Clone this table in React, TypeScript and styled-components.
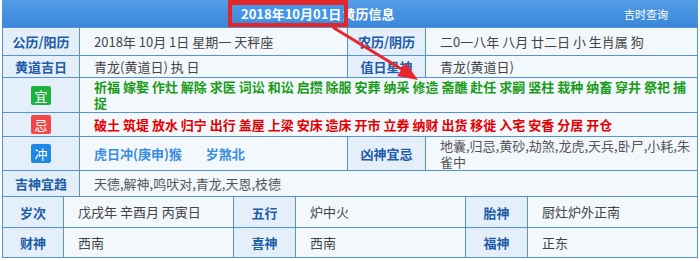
import React from 'react';
import styled, { createGlobalStyle } from 'styled-components';

const BORDER = '#5592da';

const GlobalStyle = createGlobalStyle`
  body {
    margin: 0;
    background: #ffffff;
    font-family: "Noto Sans CJK SC", "Noto Sans", sans-serif;
  }
`;

const TOP_COLS = '76px 267px 77px 1fr';
const WIDE_COLS = '76px 1fr';
const BOTTOM_COLS = '60px 169px 61px 169px 61px 1fr';

const App: React.FC = () => {
    return <Page>
        <GlobalStyle />
        <Panel>
            <Header>
                <Title><DateMark>2018年10月01日</DateMark>黄历信息</Title>
                <HeaderLink>吉时查询</HeaderLink>
            </Header>

            <Row $cols={TOP_COLS} $h={27}>
                <Label>公历/阳历</Label>
                <Value>2018年 10月 1日 星期一 天秤座</Value>
                <Label>农历/阴历</Label>
                <Value>二0一八年 八月 廿二日 小 生肖属 狗</Value>
            </Row>
            <Row $cols={TOP_COLS} $h={21}>
                <Label>黄道吉日</Label>
                <Value>青龙(黄道日) 执 日</Value>
                <Label>值日星神</Label>
                <Value>青龙(黄道日)</Value>
            </Row>
            <Row $cols={WIDE_COLS} $h={34}>
                <Label><Badge $bg="#1db23f">宜</Badge></Label>
                <Value $tone="good">祈福 嫁娶 作灶 解除 求医 词讼 和讼 启攒 除服 安葬 纳采 修造 斋醮 赴任 求嗣 竖柱 栽种 纳畜 穿井 祭祀 捕捉</Value>
            </Row>
            <Row $cols={WIDE_COLS} $h={23}>
                <Label><Badge $bg="#f04747">忌</Badge></Label>
                <Value $tone="bad">破土 筑堤 放水 归宁 出行 盖屋 上梁 安床 造床 开市 立券 纳财 出货 移徙 入宅 安香 分居 开仓</Value>
            </Row>
            <Row $cols={TOP_COLS} $h={33}>
                <Label><Badge $bg="#1e88e5">冲</Badge></Label>
                <Value $tone="clash">
                    <ClashItem>虎日冲(庚申)猴</ClashItem>
                    <ClashItem>岁煞北</ClashItem>
                </Value>
                <Label>凶神宜忌</Label>
                <Value $tone="muted">地囊,归忌,黄砂,劫煞,龙虎,天兵,卧尸,小耗,朱雀中</Value>
            </Row>
            <Row $cols={WIDE_COLS} $h={25}>
                <Label>吉神宜趋</Label>
                <Value $tone="muted">天德,解神,鸣吠对,青龙,天恩,枝德</Value>
            </Row>

            <Row $cols={BOTTOM_COLS} $h={30}>
                <Label>岁次</Label>
                <Value>戊戌年 辛酉月 丙寅日</Value>
                <Label>五行</Label>
                <Value>炉中火</Value>
                <Label>胎神</Label>
                <Value>厨灶炉外正南</Value>
            </Row>
            <Row $cols={BOTTOM_COLS} $h={29}>
                <Label>财神</Label>
                <Value>西南</Value>
                <Label>喜神</Label>
                <Value>西南</Value>
                <Label>福神</Label>
                <Value>正东</Value>
            </Row>

            {/* red pointer drawn over the table, from the date box down to 修造 */}
            <Pointer width="92" height="60" viewBox="0 0 92 60">
                <line x1="3" y1="4" x2="72" y2="46" stroke="#e8262b" strokeWidth="3" strokeLinecap="round" />
                <polygon points="87,56 66,52 75,39" fill="#e8262b" />
            </Pointer>
        </Panel>
    </Page>
};

const Page = styled.div`
    width: 700px;
    height: 261px;
    overflow: hidden;
`

const Panel = styled.div`
    position: relative;
    width: 694px;
    margin-left: 2px;
    border: 1px solid ${BORDER};
    border-top: none;
`

const Header = styled.div`
    height: 27px;
    margin: 0 -1px;
    padding: 0 30px 0 238px;
    display: flex;
    align-items: center;
    color: #ffffff;
    background: linear-gradient(to bottom, #539de5, #3b87da);
`

const Title = styled.h1`
    flex: 1;
    margin: 0;
    font-size: 13px;
    font-weight: bold;
    line-height: 15px;
    white-space: nowrap;
`

const DateMark = styled.span`
    position: relative;
    display: inline-block;
    padding: 0 1px;
    background: #4395ea;
    &::after {
        content: "";
        position: absolute;
        left: -12px;
        right: -6px;
        top: -6px;
        bottom: -6px;
        border: 4px solid #e3262a;
        border-top-width: 5px;
    }
`

const HeaderLink = styled.a`
    font-size: 11px;
    color: #ffffff;
    cursor: pointer;
`

const Row = styled.div<{ $cols: string; $h: number }>`
    display: grid;
    grid-template-columns: ${p => p.$cols};
    column-gap: 1px;
    height: ${p => p.$h}px;
    background: ${BORDER};
    border-top: 1px solid ${BORDER};
`

const Label = styled.div`
    display: flex;
    align-items: center;
    justify-content: center;
    background: #e5effa;
    color: #1d5ca6;
    font-size: 13px;
    font-weight: bold;
    white-space: nowrap;
`

const toneColor = {
    plain: '#444444',
    good: '#1a9b1a',
    bad: '#e40000',
    clash: '#3a8ce0',
    muted: '#555555',
};

const Value = styled.div<{ $tone?: keyof typeof toneColor }>`
    display: flex;
    align-items: center;
    padding: 0 3px 0 14px;
    background: #f3f8fd;
    color: ${p => toneColor[p.$tone || 'plain']};
    font-size: 13px;
    line-height: 16px;
    font-weight: ${p => (p.$tone === 'good' || p.$tone === 'bad' || p.$tone === 'clash') ? 'bold' : 'normal'};
`

const ClashItem = styled.span`
    margin-right: 24px;
`

const Badge = styled.span<{ $bg: string }>`
    display: inline-flex;
    align-items: center;
    justify-content: center;
    width: 20px;
    height: 19px;
    border-radius: 2px;
    background: ${p => p.$bg};
    color: #ffffff;
    font-size: 13px;
    font-weight: normal;
`

const Pointer = styled.svg`
    position: absolute;
    left: 328px;
    top: 24px;
    z-index: 2;
    pointer-events: none;
`

export default App;
